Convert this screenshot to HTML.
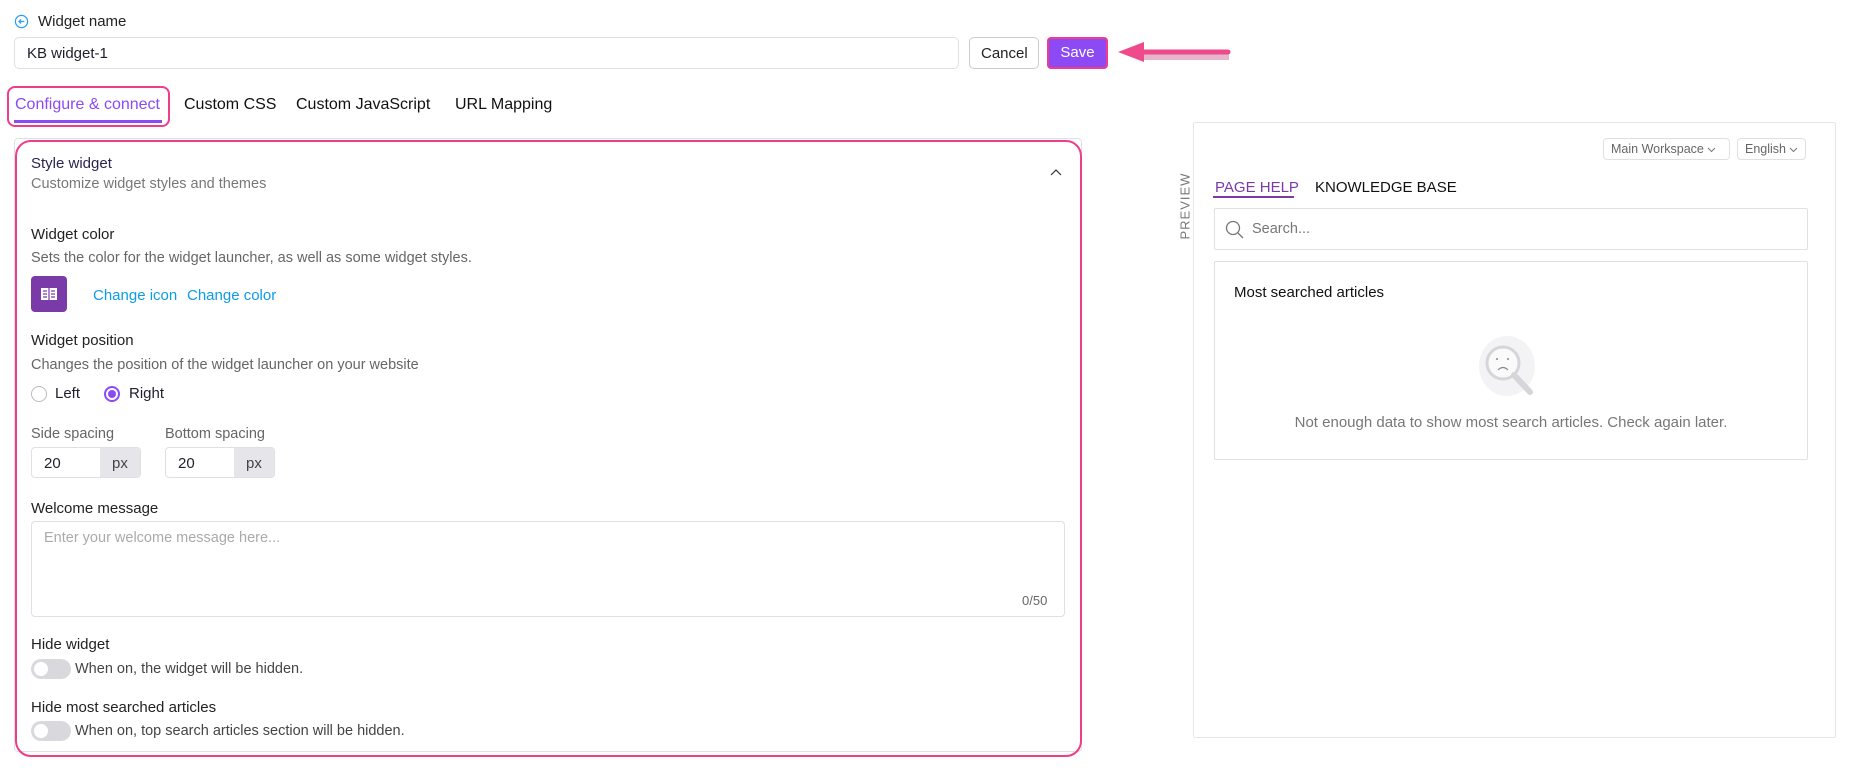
<!DOCTYPE html>
<html><head><meta charset="utf-8"><style>
*{box-sizing:border-box;margin:0;padding:0}
body{width:1856px;height:775px;background:#fff;font-family:"Liberation Sans",sans-serif;color:#1f1f2e;position:relative;overflow:hidden;font-size:15px}
.a{position:absolute;white-space:nowrap}
.lbl{font-size:15px;color:#222;font-weight:500}
.sub{font-size:14.5px;color:#666}
.box{position:absolute;border:1px solid #e0e0e4;border-radius:4px;background:#fff;white-space:nowrap}
.tog{position:absolute;width:40px;height:20px;border-radius:10px;background:#d9d9dd}
.tog:after{content:"";position:absolute;left:3px;top:3px;width:14px;height:14px;border-radius:50%;background:#fff}
</style></head><body>
<svg class="a" style="left:14px;top:14px" width="15" height="15" viewBox="0 0 16 16"><circle cx="8" cy="8" r="6.5" fill="none" stroke="#2a9df4" stroke-width="1.3"/><path d="M11 8H5.5M7.5 5.8L5.3 8l2.2 2.2" fill="none" stroke="#2a9df4" stroke-width="1.3"/></svg>
<div class="a" style="left:38px;top:13px;font-size:15px;color:#222">Widget name</div>
<div class="box" style="left:14px;top:37px;width:945px;height:32px;border-radius:5px"></div>
<div class="a" style="left:27px;top:45px;font-size:15px">KB widget-1</div>
<div class="box" style="left:969px;top:37px;width:70px;height:32px;border-radius:5px;border-color:#ccc"></div>
<div class="a" style="left:981px;top:45px;font-size:15px;color:#222">Cancel</div>
<div class="a" style="left:1047px;top:37px;width:61px;height:32px;border:2px solid #ef3d8a;border-radius:4px;background:#8b4af4;color:#fff;font-size:15px;text-align:center;line-height:28px">Save</div>
<svg class="a" style="left:1112px;top:42px" width="120" height="26"><path d="M116 12H28" stroke="#b8356b" stroke-width="6" opacity=".35" transform="translate(1,3)"/><path d="M116 10H28" stroke="#ef4a8c" stroke-width="5" stroke-linecap="round"/><path d="M6 10L32 0v20z" fill="#ef4a8c"/></svg>
<div class="a" style="left:7px;top:86px;width:163px;height:41px;border:2.5px solid #ef3d8a;border-radius:8px"></div>
<div class="a" style="left:15px;top:96px;font-size:16px;color:#8b4af4">Configure &amp; connect</div>
<div class="a" style="left:14px;top:120px;width:148px;height:3px;background:#8b4af4"></div>
<div class="a" style="left:184px;top:96px;font-size:16px;color:#111">Custom CSS</div>
<div class="a" style="left:296px;top:96px;font-size:16px;color:#111">Custom JavaScript</div>
<div class="a" style="left:455px;top:96px;font-size:16px;color:#111">URL Mapping</div>
<div class="box" style="left:14px;top:138px;width:1068px;height:614px"></div>
<div class="a" style="left:15px;top:140px;width:1067px;height:617px;border:2.5px solid #ef3d8a;border-radius:16px"></div>
<div class="a lbl" style="left:31px;top:155px;color:#2d2350">Style widget</div>
<div class="a sub" style="left:31px;top:176px;color:#777">Customize widget styles and themes</div>
<svg class="a" style="left:1050px;top:168px" width="12" height="8"><path d="M1 7l5-5 5 5" fill="none" stroke="#333" stroke-width="1.2"/></svg>
<div class="a lbl" style="left:31px;top:226px">Widget color</div>
<div class="a sub" style="left:31px;top:250px">Sets the color for the widget launcher, as well as some widget styles.</div>
<div class="a" style="left:31px;top:276px;width:36px;height:36px;border-radius:4px;background:#7a3aa8"></div>
<svg class="a" style="left:40px;top:287px" width="18" height="14"><rect x="1" y="1" width="16" height="12" fill="#fff"/><path d="M9 1v12M3 4h4M3 7h4M3 10h4M11 4h4M11 7h4M11 10h4" stroke="#7a3aa8" stroke-width="1.2"/></svg>
<div class="a" style="left:93px;top:287px;font-size:15px;color:#0e9be8;font-weight:500">Change icon</div>
<div class="a" style="left:187px;top:287px;font-size:15px;color:#0e9be8;font-weight:500">Change color</div>
<div class="a lbl" style="left:31px;top:332px">Widget position</div>
<div class="a sub" style="left:31px;top:357px">Changes the position of the widget launcher on your website</div>
<div class="a" style="left:31px;top:386px;width:16px;height:16px;border:1px solid #bbb;border-radius:50%"></div>
<div class="a" style="left:55px;top:385px;font-size:15px">Left</div>
<div class="a" style="left:104px;top:386px;width:16px;height:16px;border:2px solid #8b4af4;border-radius:50%;padding:2px"><div style="width:8px;height:8px;border-radius:50%;background:#8b4af4"></div></div>
<div class="a" style="left:129px;top:385px;font-size:15px">Right</div>
<div class="a sub" style="left:31px;top:426px">Side spacing</div>
<div class="a sub" style="left:165px;top:426px">Bottom spacing</div>
<div class="box" style="left:31px;top:447px;width:110px;height:31px;overflow:hidden"><div style="position:absolute;left:68px;top:0;width:42px;height:31px;background:#e6e6ea"></div></div>
<div class="a" style="left:44px;top:455px;font-size:15px">20</div><div class="a" style="left:112px;top:455px;font-size:15px;color:#444">px</div>
<div class="box" style="left:165px;top:447px;width:110px;height:31px;overflow:hidden"><div style="position:absolute;left:68px;top:0;width:42px;height:31px;background:#e6e6ea"></div></div>
<div class="a" style="left:178px;top:455px;font-size:15px">20</div><div class="a" style="left:246px;top:455px;font-size:15px;color:#444">px</div>
<div class="a lbl" style="left:31px;top:500px">Welcome message</div>
<div class="box" style="left:31px;top:521px;width:1034px;height:96px"></div>
<div class="a" style="left:44px;top:530px;font-size:14.5px;color:#aaa">Enter your welcome message here...</div>
<div class="a" style="left:1022px;top:593px;font-size:13px;color:#666">0/50</div>
<div class="a lbl" style="left:31px;top:636px">Hide widget</div>
<div class="tog" style="left:31px;top:659px"></div>
<div class="a sub" style="left:75px;top:661px;color:#444">When on, the widget will be hidden.</div>
<div class="a lbl" style="left:31px;top:699px">Hide most searched articles</div>
<div class="tog" style="left:31px;top:721px"></div>
<div class="a sub" style="left:75px;top:723px;color:#444">When on, top search articles section will be hidden.</div>
<div class="a" style="left:1153px;top:200px;transform:rotate(-90deg);transform-origin:center;font-size:13px;color:#777;letter-spacing:1px;width:64px;text-align:center">PREVIEW</div>
<div class="box" style="left:1193px;top:122px;width:643px;height:616px;border-color:#e6e6ea;border-radius:2px"></div>
<div class="box" style="left:1603px;top:138px;width:127px;height:22px;font-size:12.5px;color:#666;padding:3px 7px">Main Workspace <svg width="9" height="6" viewBox="0 0 9 6"><path d="M1 1l3.5 3.5L8 1" fill="none" stroke="#777"/></svg></div>
<div class="box" style="left:1737px;top:138px;width:69px;height:22px;font-size:12.5px;color:#666;padding:3px 7px">English <svg width="9" height="6" viewBox="0 0 9 6"><path d="M1 1l3.5 3.5L8 1" fill="none" stroke="#777"/></svg></div>
<div class="a" style="left:1215px;top:179px;font-size:15px;color:#7a3aa8">PAGE HELP</div>
<div class="a" style="left:1213px;top:196px;width:81px;height:2px;background:#7a3aa8"></div>
<div class="a" style="left:1315px;top:179px;font-size:15px;color:#111">KNOWLEDGE BASE</div>
<div class="box" style="left:1214px;top:208px;width:594px;height:42px;border-radius:2px"></div>
<svg class="a" style="left:1224px;top:219px" width="22" height="22" viewBox="0 0 22 22"><circle cx="9" cy="9" r="6.5" fill="none" stroke="#777" stroke-width="1.3"/><path d="M14 14l5 5" stroke="#777" stroke-width="1.3"/></svg>
<div class="a" style="left:1252px;top:221px;font-size:14.5px;color:#777">Search...</div>
<div class="box" style="left:1214px;top:261px;width:594px;height:199px;border-radius:2px"></div>
<div class="a" style="left:1234px;top:284px;font-size:15px;color:#111">Most searched articles</div>
<svg class="a" style="left:1474px;top:332px" width="70" height="74" viewBox="0 0 70 74"><ellipse cx="33" cy="34" rx="28" ry="30" fill="#f3f3f5"/><circle cx="29" cy="31" r="16" fill="#fafafa" stroke="#d6d6da" stroke-width="3"/><path d="M40 43l16 17" stroke="#d6d6da" stroke-width="6" stroke-linecap="round"/><path d="M24 38q5-5 10 0" fill="none" stroke="#888" stroke-width="1.2"/><circle cx="23" cy="27" r="1" fill="#888"/><circle cx="34" cy="27" r="1" fill="#888"/></svg>
<div class="a" style="left:1214px;top:414px;width:594px;text-align:center;font-size:15px;color:#777">Not enough data to show most search articles. Check again later.</div>
</body></html>
